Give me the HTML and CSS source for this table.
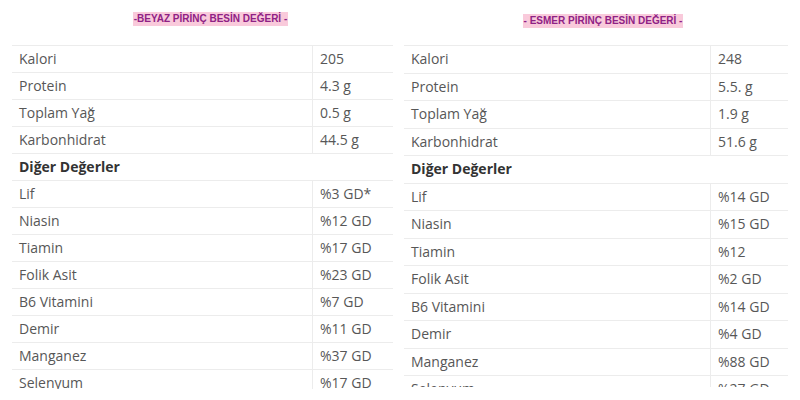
FILE: index.html
```html
<!DOCTYPE html>
<html lang="tr">
<head>
<meta charset="utf-8">
<title>Pirinç Besin Değeri</title>
<link rel="stylesheet" href="styles.css">
</head>
<body>
<div class="page">
  <section class="panel panel-left">
    <div class="title-row"><span class="title">-BEYAZ PİRİNÇ BESİN DEĞERİ -</span></div>
    <div class="clip">
      <table class="nutri">
        <tr><td class="name">Kalori</td><td class="val">205</td></tr>
        <tr><td class="name">Protein</td><td class="val">4.3 g</td></tr>
        <tr><td class="name">Toplam Yağ</td><td class="val">0.5 g</td></tr>
        <tr><td class="name">Karbonhidrat</td><td class="val">44.5 g</td></tr>
        <tr><td class="head" colspan="2">Diğer Değerler</td></tr>
        <tr><td class="name">Lif</td><td class="val">%3 GD*</td></tr>
        <tr><td class="name">Niasin</td><td class="val">%12 GD</td></tr>
        <tr><td class="name">Tiamin</td><td class="val">%17 GD</td></tr>
        <tr><td class="name">Folik Asit</td><td class="val">%23 GD</td></tr>
        <tr><td class="name">B6 Vitamini</td><td class="val">%7 GD</td></tr>
        <tr><td class="name">Demir</td><td class="val">%11 GD</td></tr>
        <tr><td class="name">Manganez</td><td class="val">%37 GD</td></tr>
        <tr><td class="name">Selenyum</td><td class="val">%17 GD</td></tr>
      </table>
    </div>
  </section>
  <section class="panel panel-right">
    <div class="title-row"><span class="title">- ESMER PİRİNÇ BESİN DEĞERİ -</span></div>
    <div class="clip">
      <table class="nutri">
        <tr><td class="name">Kalori</td><td class="val">248</td></tr>
        <tr><td class="name">Protein</td><td class="val">5.5. g</td></tr>
        <tr><td class="name">Toplam Yağ</td><td class="val">1.9 g</td></tr>
        <tr><td class="name">Karbonhidrat</td><td class="val">51.6 g</td></tr>
        <tr><td class="head" colspan="2">Diğer Değerler</td></tr>
        <tr><td class="name">Lif</td><td class="val">%14 GD</td></tr>
        <tr><td class="name">Niasin</td><td class="val">%15 GD</td></tr>
        <tr><td class="name">Tiamin</td><td class="val">%12</td></tr>
        <tr><td class="name">Folik Asit</td><td class="val">%2 GD</td></tr>
        <tr><td class="name">B6 Vitamini</td><td class="val">%14 GD</td></tr>
        <tr><td class="name">Demir</td><td class="val">%4 GD</td></tr>
        <tr><td class="name">Manganez</td><td class="val">%88 GD</td></tr>
        <tr><td class="name">Selenyum</td><td class="val">%27 GD</td></tr>
      </table>
    </div>
  </section>
</div>
</body>
</html>
```
FILE: styles.css
```css
html, body {
  margin: 0;
  padding: 0;
  background: #ffffff;
}
body {
  width: 800px;
  height: 400px;
  overflow: hidden;
  font-family: "Open Sans", "Noto Sans", sans-serif;
  color: #575757;
}
.page {
  display: flex;
  align-items: flex-start;
}
.panel {
  display: flex;
  flex-direction: column;
}
.panel-left {
  width: 381px;
  padding-left: 12px;
  padding-right: 5px;
}
.panel-right {
  width: 384px;
  padding-left: 6px;
}
.title-row {
  display: flex;
  justify-content: center;
  height: 45px;
  box-sizing: border-box;
}
.panel-left .title-row {
  padding-top: 12px;
  padding-left: 16px;
}
.panel-right .title-row {
  padding-top: 14px;
  padding-left: 14px;
}
.title {
  font-family: "Liberation Sans", Arial, sans-serif;
  font-weight: bold;
  font-size: 10px;
  line-height: 14px;
  height: 14px;
  color: #8f2185;
  background: #f9cadb;
  padding: 0 1px;
}
.clip {
  overflow: hidden;
}
.panel-left .clip {
  height: 344px;
}
.panel-right .clip {
  height: 342px;
}
.nutri {
  width: 100%;
  border-collapse: collapse;
  font-size: 14px;
}
.nutri td {
  border-top: 1px solid #ececec;
  border-bottom: 1px solid #ececec;
  padding: 0 7px;
  height: 26px;
  vertical-align: middle;
  line-height: 16px;
}
.panel-right .nutri td {
  height: 26.5px;
}
.nutri td.val {
  border-left: 1px solid #ececec;
  width: 66px;
}
.panel-right .nutri td.val {
  width: 63px;
}
.nutri td.head {
  font-weight: bold;
  color: #333333;
}
```
